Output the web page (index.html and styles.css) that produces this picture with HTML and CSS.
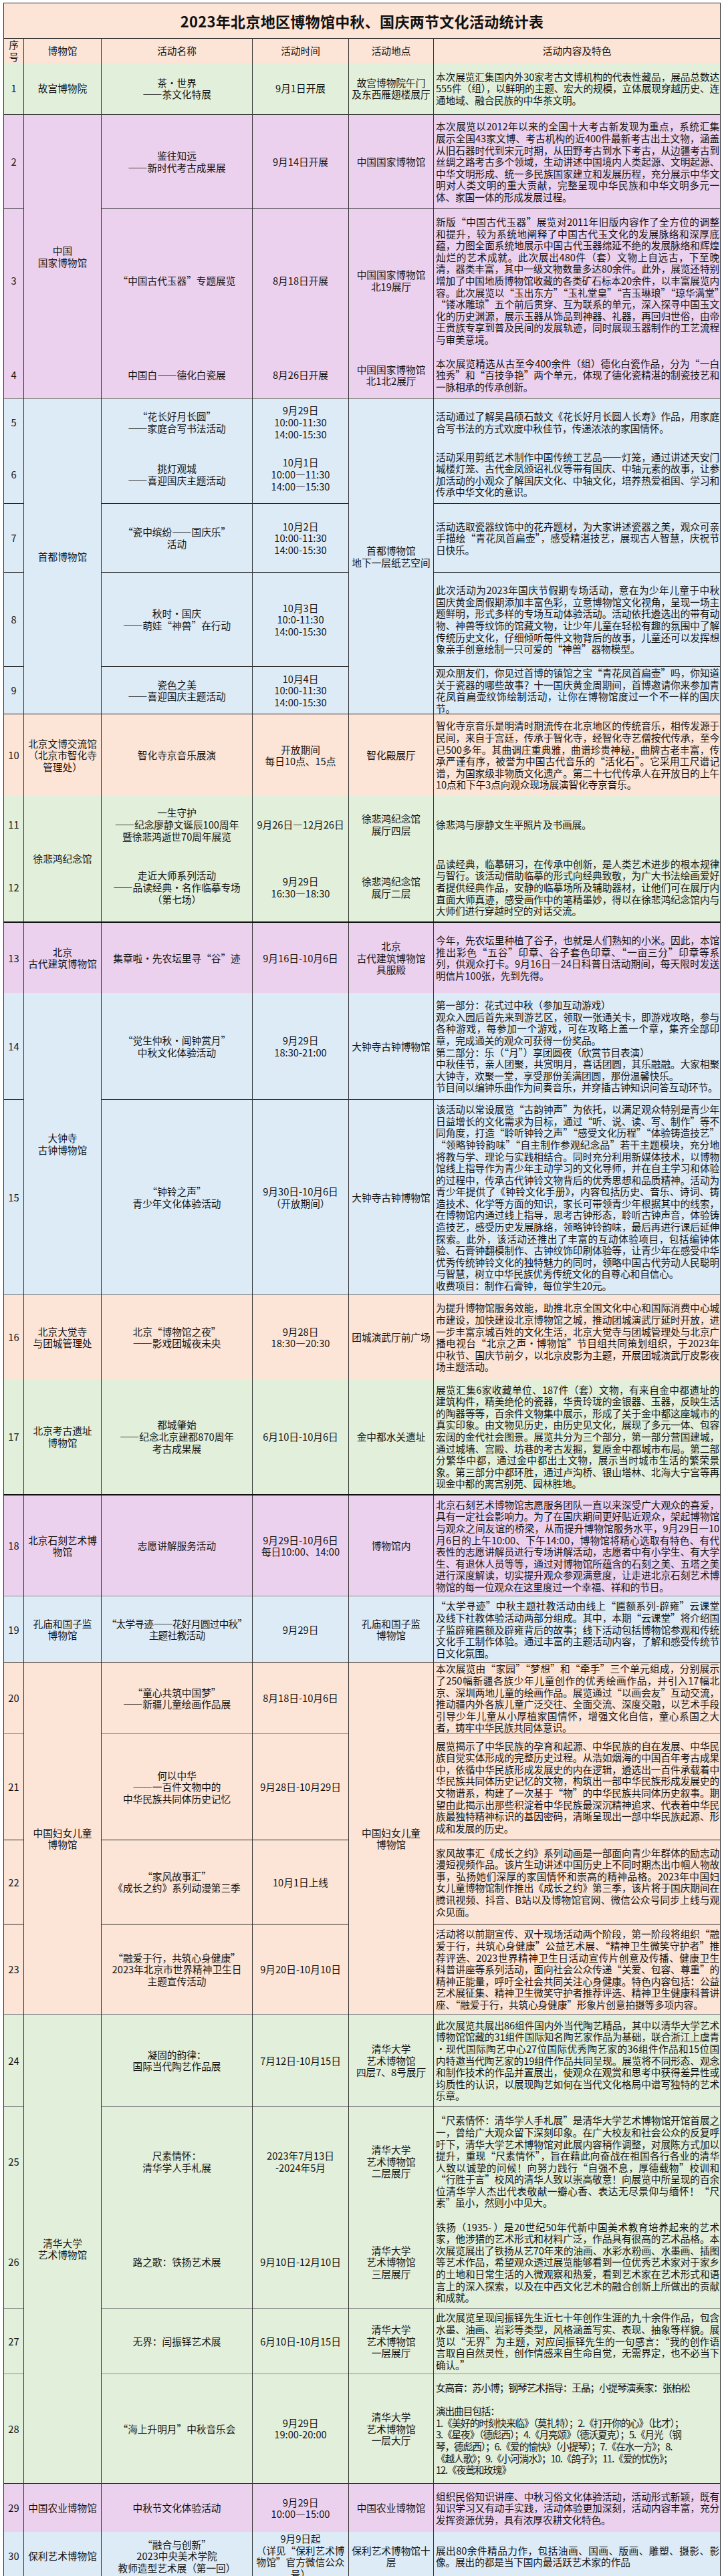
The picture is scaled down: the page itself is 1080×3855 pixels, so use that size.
FILE: index.html
```html
<!DOCTYPE html>
<html lang="zh-CN">
<head>
<meta charset="utf-8">
<title>2023年北京地区博物馆中秋、国庆两节文化活动统计表</title>
<link rel="stylesheet" href="styles.css">
</head>
<body>
<table class="stats">
  <colgroup>
    <col class="w-seq"><col class="w-mus"><col class="w-name"><col class="w-time"><col class="w-place"><col class="w-desc">
  </colgroup>
  <tbody>
    <tr class="c-peach h53 t-dark">
      <th class="title" colspan="6">2023年北京地区博物馆中秋、国庆两节文化活动统计表</th>
    </tr>
    <tr class="c-peach h36 t-dark head">
      <td>序<br>号</td><td>博物馆</td><td>活动名称</td><td>活动时间</td><td>活动地点</td><td>活动内容及特色</td>
    </tr>

    <tr class="c-green h78 t-none">
      <td>1</td><td>故宫博物院</td><td>茶·世界<br>——茶文化特展</td><td>9月1日开展</td><td>故宫博物院午门<br>及东西雁翅楼展厅</td>
      <td class="d">本次展览汇集国内外30家考古文博机构的代表性藏品，展品总数达555件（组），以鲜明的主题、宏大的规模，立体展现穿越历史、连通地域、融合民族的中华茶文明。</td>
    </tr>

    <tr class="c-purple h141 t-dark">
      <td>2</td><td rowspan="3">中国<br>国家博物馆</td><td>鉴往知远<br>——新时代考古成果展</td><td>9月14日开展</td><td>中国国家博物馆</td>
      <td class="d">本次展览以2012年以来的全国十大考古新发现为重点，系统汇集展示全国43家文博、考古机构的近400件最新考古出土文物，涵盖从旧石器时代到宋元时期，从田野考古到水下考古，从边疆考古到丝绸之路考古多个领域，生动讲述中国境内人类起源、文明起源、中华文明形成、统一多民族国家建立和发展历程，充分展示中华文明对人类文明的重大贡献，完整呈现中华民族和中华文明多元一体、家国一体的形成发展过程。</td>
    </tr>
    <tr class="c-purple h214 t-dark">
      <td>3</td><td>“中国古代玉器”专题展览</td><td>8月18日开展</td><td>中国国家博物馆<br>北19展厅</td>
      <td class="d">新版“中国古代玉器”展览对2011年旧版内容作了全方位的调整和提升，较为系统地阐释了中国古代玉文化的发展脉络和深厚底蕴，力图全面系统地展示中国古代玉器绵延不绝的发展脉络和辉煌灿烂的艺术成就。此次展出480件（套）文物上自远古，下至晚清，器类丰富，其中一级文物数量多达80余件。此外，展览还特别增加了中国地质博物馆收藏的各类矿石标本20余件，以丰富展览内容。此次展览以“玉出东方”“玉礼堂皇”“吉玉琳琅”“琼华满堂”“镂冰雕琼”五个前后贯穿、互为联系的单元，深入探寻中国玉文化的历史渊源，展示玉器从饰品到神器、礼器，再回归世俗，由帝王贵族专享到普及民间的发展轨迹，同时展现玉器制作的工艺流程与审美意境。</td>
    </tr>
    <tr class="c-purple h70 t-none">
      <td>4</td><td>中国白——德化白瓷展</td><td>8月26日开展</td><td>中国国家博物馆<br>北1北2展厅</td>
      <td class="d">本次展览精选从古至今400余件（组）德化白瓷作品，分为“一白独秀”和“百技争艳”两个单元，体现了德化瓷精湛的制瓷技艺和一脉相承的传承创新。</td>
    </tr>

    <tr class="c-blue h70 t-gray">
      <td>5</td><td rowspan="5">首都博物馆</td><td>“花长好月长圆”<br>——家庭合写书法活动</td><td>9月29日<br>10:00-11:30<br>14:00-15:30</td><td rowspan="5">首都博物馆<br>地下一层纸艺空间</td>
      <td class="d">活动通过了解吴昌硕石鼓文《花长好月长圆人长寿》作品，用家庭合写书法的方式欢度中秋佳节，传递浓浓的家国情怀。</td>
    </tr>
    <tr class="c-blue h87 t-none">
      <td>6</td><td>挑灯观城<br>——喜迎国庆主题活动</td><td>10月1日<br>10:00—11:30<br>14:00—15:30</td>
      <td class="d">活动采用剪纸艺术制作中国传统工艺品——灯笼，通过讲述天安门城楼灯笼、古代金凤颁诏礼仪等带有国庆、中轴元素的故事，让参加活动的小观众了解国庆文化、中轴文化，培养热爱祖国、学习和传承中华文化的意识。</td>
    </tr>
    <tr class="c-blue h103 t-dark">
      <td>7</td><td>“瓷中缤纷——国庆乐”<br>活动</td><td>10月2日<br>10:00-11:30<br>14:00-15:30</td>
      <td class="d">活动选取瓷器纹饰中的花卉题材，为大家讲述瓷器之美，观众可亲手描绘“青花凤首扁壶”，感受精湛技艺，展现古人智慧，庆祝节日快乐。</td>
    </tr>
    <tr class="c-blue h141 t-dark">
      <td>8</td><td>秋时·国庆<br>——萌娃“神兽”在行动</td><td>10月3日<br>10:0-11:30<br>14:00-15:30</td>
      <td class="d">此次活动为2023年国庆节假期专场活动，意在为少年儿童于中秋国庆黄金周假期添加丰富色彩，立意博物馆文化视角，呈现一场主题鲜明，形式多样的专场互动体验活动。活动依托遴选出的带有动物、神兽等纹饰的馆藏文物，让少年儿童在轻松有趣的氛围中了解传统历史文化，仔细倾听每件文物背后的故事，儿童还可以发挥想象亲手创意绘制一只可爱的“神兽”器物模型。</td>
    </tr>
    <tr class="c-blue h71 t-dark">
      <td>9</td><td>瓷色之美<br>——喜迎国庆主题活动</td><td>10月4日<br>10:00-11:30<br>14:00-15:30</td>
      <td class="d">观众朋友们，你见过首博的镇馆之宝“青花凤首扁壶”吗，你知道关于瓷器的哪些故事？十一国庆黄金周期间，首博邀请你来参加青花凤首扁壶纹饰绘制活动，让你在博物馆度过一个不一样的国庆节。</td>
    </tr>

    <tr class="c-peach h122 t-dark">
      <td>10</td><td>北京文博交流馆<br>（北京市智化寺<br>管理处）</td><td>智化寺京音乐展演</td><td>开放期间<br>每日10点、15点</td><td>智化殿展厅</td>
      <td class="d">智化寺京音乐是明清时期流传在北京地区的传统音乐，相传发源于民间，来自于宫廷，传承于智化寺，经智化寺艺僧按代传承，至今已500多年。其曲调庄重典雅，曲谱珍贵神秘，曲牌古老丰富，传承严谨有序，被誉为中国古代音乐的“活化石”。它采用工尺谱记谱，为国家级非物质文化遗产。第二十七代传承人在开放日的上午10点和下午3点向观众现场展演智化寺京音乐。</td>
    </tr>

    <tr class="c-green h86 t-none">
      <td>11</td><td rowspan="2">徐悲鸿纪念馆</td><td>一生守护<br>——纪念廖静文诞辰100周年<br>暨徐悲鸿逝世70周年展览</td><td>9月26日—12月26日</td><td>徐悲鸿纪念馆<br>展厅四层</td>
      <td class="d">徐悲鸿与廖静文生平照片及书画展。</td>
    </tr>
    <tr class="c-green h103 t-none">
      <td>12</td><td>走近大师系列活动<br>——品读经典·名作临摹专场<br>（第七场）</td><td>9月29日<br>16:30—18:30</td><td>徐悲鸿纪念馆<br>展厅二层</td>
      <td class="d">品读经典，临摹研习，在传承中创新，是人类艺术进步的根本规律与智行。该活动借助临摹的形式向经典致敬，为广大书法绘画爱好者提供经典作品，安静的临摹场所及辅助器材，让他们可在展厅内直面大师真迹，感受画作中的笔精墨妙，得以在徐悲鸿纪念馆内与大师们进行穿越时空的对话交流。</td>
    </tr>

    <tr class="c-purple h106 t-thick">
      <td>13</td><td>北京<br>古代建筑博物馆</td><td>集章啦·先农坛里寻“谷”迹</td><td>9月16日-10月6日</td><td>北京<br>古代建筑博物馆<br>具服殿</td>
      <td class="d">今年，先农坛里种植了谷子，也就是人们熟知的小米。因此，本馆推出彩色“五谷”印章、谷子套色印章、“一亩三分”印章等系列，供观众打卡。9月16日—24日科普日活动期间，每天限时发送明信片100张，先到先得。</td>
    </tr>

    <tr class="c-blue h160 t-none">
      <td>14</td><td rowspan="2">大钟寺<br>古钟博物馆</td><td>“觉生仲秋·闻钟赏月”<br>中秋文化体验活动</td><td>9月29日<br>18:30-21:00</td><td>大钟寺古钟博物馆</td>
      <td class="d">第一部分：花式过中秋（参加互动游戏）<br>观众入园后首先来到游艺区，领取一张通关卡，即游戏攻略，参与各种游戏，每参加一个游戏，可在攻略上盖一个章，集齐全部印章，完成通关的观众可获得一份奖品。<br>第二部分：乐（“月”）享团圆夜（欣赏节目表演）<br>中秋佳节，亲人团聚，共赏明月，喜话团圆，其乐融融。大家相聚大钟寺，欢聚一堂，享受那份美满团圆，那份温馨快乐。<br>节目间以编钟乐曲作为间奏音乐，并穿插古钟知识问答互动环节。</td>
    </tr>
    <tr class="c-blue h292 t-dark">
      <td>15</td><td>“钟铃之声”<br>青少年文化体验活动</td><td>9月30日-10月6日<br>（开放期间）</td><td>大钟寺古钟博物馆</td>
      <td class="d">该活动以常设展览“古韵钟声”为依托，以满足观众特别是青少年日益增长的文化需求为目标，通过“听、说、读、写、制作”等不同角度，打造“聆听钟铃之声”“感受文化历程”“体验铸造技艺”“领略钟铃韵味”“自主制作参观纪念品”若干主题模块，充分地将教与学、理论与实践相结合。同时充分利用新媒体技术，以博物馆线上指导作为青少年主动学习的文化导师，并在自主学习和体验的过程中，传承古代钟铃文物背后的优秀思想和品质精神。活动为青少年提供了《钟铃文化手册》，内容包括历史、音乐、诗词、铸造技术、化学等方面的知识，家长可带领青少年根据其中的线索，在博物馆内通过线上指导，思考古钟形态，聆听古钟声音，体验铸造技艺，感受历史发展脉络，领略钟铃韵味，最后再进行课后延伸探索。此外，该活动还推出了丰富的互动体验项目，包括编钟体验、石膏钟翻模制作、古钟纹饰印刷体验等，让青少年在感受中华优秀传统钟铃文化的独特魅力的同时，领略中国古代劳动人民聪明与智慧，树立中华民族优秀传统文化的自尊心和自信心。<br>收费项目：制作石膏钟，每位学生20元。</td>
    </tr>

    <tr class="c-peach h126 t-gray">
      <td>16</td><td>北京大觉寺<br>与团城管理处</td><td>北京“博物馆之夜”<br>——影戏团城夜未央</td><td>9月28日<br>18:30—20:30</td><td>团城演武厅前广场</td>
      <td class="d">为提升博物馆服务效能，助推北京全国文化中心和国际消费中心城市建设，加快建设北京博物馆之城，推动团城演武厅延时开放，进一步丰富京城百姓的文化生活，北京大觉寺与团城管理处与北京广播电视台“北京之声·博物馆”节目组共同策划组织，于2023年中秋节、国庆节前夕，以北京皮影为主题，开展团城演武厅皮影夜场主题活动。</td>
    </tr>

    <tr class="c-green h173 t-none">
      <td>17</td><td>北京考古遗址<br>博物馆</td><td>都城肇始<br>——纪念北京建都870周年<br>考古成果展</td><td>6月10日-10月6日</td><td>金中都水关遗址</td>
      <td class="d">展览汇集6家收藏单位、187件（套）文物，有来自金中都遗址的建筑构件，精美绝伦的瓷器，华贵玲珑的金银器、玉器，反映生活的陶器等等，百余件文物集中展示，形成了关于金中都这座城市的真实印象。由文物见历史，由历史见文化，展现了多元一体、包容宏阔的金代社会图景。展览共分为三个部分，第一部分营国建城，通过城墙、宫殿、坊巷的考古发掘，复原金中都城市布局。第二部分繁华中都，通过金中都出土文物，展示当时城市生活的繁荣景象。第三部分中都环胜，通过卢沟桥、银山塔林、北海大宁宫等再现金中都的离宫别苑、园林胜地。</td>
    </tr>

    <tr class="c-purple h152 t-thick">
      <td>18</td><td>北京石刻艺术博<br>物馆</td><td>志愿讲解服务活动</td><td>9月29日-10月6日<br>每日10:00、14:00</td><td>博物馆内</td>
      <td class="d">北京石刻艺术博物馆志愿服务团队一直以来深受广大观众的喜爱，具有一定社会影响力。为了在国庆期间更好贴近观众，架起博物馆与观众之间友谊的桥梁，从而提升博物馆服务水平，9月29日—10月6日的上午10:00、下午14:00，博物馆将精心选取有特色、有代表性的志愿讲解员进行专场讲解活动，志愿者中有小学生、有大学生、有退休人员等等，通过对博物馆所蕴含的石刻之美、五塔之美进行深度解读，切实提升观众参观满意度，让走进北京石刻艺术博物馆的每一位观众在这里度过一个幸福、祥和的节日。</td>
    </tr>

    <tr class="c-blue h99 t-gray">
      <td>19</td><td>孔庙和国子监<br>博物馆</td><td class="tight">“太学寻迹——花好月圆过中秋”<br>主题社教活动</td><td>9月29日</td><td>孔庙和国子监<br>博物馆</td>
      <td class="d">“太学寻迹”中秋主题社教活动由线上“匾额系列-辟雍”云课堂及线下社教体验活动两部分组成。其中，本期“云课堂”将介绍国子监辟雍匾额及辟雍背后的故事；线下活动包括博物馆参观和传统文化手工制作体验。通过丰富的主题活动内容，了解和感受传统节日文化氛围。</td>
    </tr>

    <tr class="c-peach h101 t-dark">
      <td>20</td><td rowspan="4">中国妇女儿童<br>博物馆</td><td>“童心共筑中国梦”<br>——新疆儿童绘画作品展</td><td>8月18日-10月6日</td><td rowspan="4">中国妇女儿童<br>博物馆</td>
      <td class="d">本次展览由“家园”“梦想”和“牵手”三个单元组成，分别展示了250幅新疆各族少年儿童创作的优秀绘画作品，并引入17幅北京、深圳两地儿童的绘画作品。展览通过“以画会友”互动交流，推动疆内外各族儿童广泛交往、全面交流、深度交融，以艺术手段引导少年儿童从小厚植家国情怀，增强文化自信，童心系国之大者，铸牢中华民族共同体意识。</td>
    </tr>
    <tr class="c-peach h159 t-gray">
      <td>21</td><td>何以中华<br>——一百件文物中的<br>中华民族共同体历史记忆</td><td>9月28日-10月29日</td>
      <td class="d">展览揭示了中华民族的孕育和起源、中华民族的自在发展、中华民族自觉实体形成的完整历史过程。从浩如烟海的中国百年考古成果中，依循中华民族形成发展史的内在逻辑，遴选出一百件承载着中华民族共同体历史记忆的文物，构筑出一部中华民族形成发展史的文物谱系，构建了一次基于“物”的中华民族共同体历史叙事。期望由此揭示出那些积淀着中华民族最深沉精神追求、代表着中华民族最独特精神标识的基因密码，清晰呈现出一部中华民族起源、形成和发展的历史。</td>
    </tr>
    <tr class="c-peach h126 t-dark">
      <td>22</td><td>“家风故事汇”<br>《成长之约》系列动漫第三季</td><td>10月1日上线</td>
      <td class="d">家风故事汇《成长之约》系列动画是一部面向青少年群体的励志动漫短视频作品。该片生动讲述中国历史上不同时期杰出巾帼人物故事，弘扬她们深厚的家国情怀和崇高的精神品格。2023年中国妇女儿童博物馆制作推出《成长之约》第三季，该片将于国庆期间在腾讯视频、抖音、B站以及博物馆官网、微信公众号同步上线与观众见面。</td>
    </tr>
    <tr class="c-peach h135 t-dark">
      <td>23</td><td>“融爱于行，共筑心身健康”<br>2023年北京市世界精神卫生日<br>主题宣传活动</td><td>9月20日-10月10日</td>
      <td class="d">活动将以前期宣传、双十现场活动两个阶段，第一阶段将组织“融爱于行，共筑心身健康”公益艺术展、“精神卫生微笑守护者”推荐评选、2023世界精神卫生日活动宣传片创意及传播、健康卫生科普讲座等系列活动，面向社会公众传递“关爱、包容、尊重”的精神正能量，呼吁全社会共同关注心身健康。特色内容包括：公益艺术展征集、精神卫生微笑守护者推荐评选、精神卫生健康科普讲座、“融爱于行，共筑心身健康”形象片创意拍摄等多项内容。</td>
    </tr>

    <tr class="c-green h138 t-gray">
      <td>24</td><td rowspan="5">清华大学<br>艺术博物馆</td><td>凝固的韵律：<br>国际当代陶艺作品展</td><td>7月12日-10月15日</td><td>清华大学<br>艺术博物馆<br>四层7、8号展厅</td>
      <td class="d">此次展览共展出86组件国内外当代陶艺精品，其中以清华大学艺术博物馆馆藏的31组件国际知名陶艺家作品为基础，联合浙江上虞青·现代国际陶艺中心27位国际优秀陶艺家的36组件作品和15位国内特邀当代陶艺家的19组件作品共同呈现。展览将不同形态、观念和制作技术的作品并置展出，使观众在观赏和思考中获得差异性或均质性的认识，以展现陶艺如何在当代文化格局中谱写独特的艺术乐章。</td>
    </tr>
    <tr class="c-green h164 t-gray">
      <td>25</td><td>尺素情怀：<br>清华学人手札展</td><td>2023年7月13日<br>-2024年5月</td><td>清华大学<br>艺术博物馆<br>二层展厅</td>
      <td class="d">“尺素情怀：清华学人手札展”是清华大学艺术博物馆开馆首展之一，曾给广大观众留下深刻印象。在广大校友和社会公众的反复呼吁下，清华大学艺术博物馆对此展内容稍作调整，对展陈方式加以提升，重现“尺素情怀”，旨在藉此向奋战在祖国各行各业的清华人致以诚挚的问候！向努力践行“自强不息，厚德载物”校训和“行胜于言”校风的清华人致以崇高敬意！向展览中所呈现的百余位清华学人杰出代表敬献一瓣心香、表达无尽景仰与缅怀！“尺素”虽小，然则小中见大。</td>
    </tr>
    <tr class="c-green h138 t-none">
      <td>26</td><td>路之歌：铁扬艺术展</td><td>9月10日-12月10日</td><td>清华大学<br>艺术博物馆<br>三层展厅</td>
      <td class="d">铁扬（1935- ）是20世纪50年代新中国美术教育培养起来的艺术家，他涉猎的艺术形式和材料广泛，作品具有很高的艺术品格。本次展览展出了铁扬从艺70年来的油画、水彩水粉画、水墨画、插图等艺术作品，希望观众透过展览能够看到一位优秀艺术家对于家乡的土地和日常生活的入微观察和热爱，看到艺术家在艺术形式和语言上的深入探索，以及在中西文化艺术的融合创新上所做出的贡献和成就。</td>
    </tr>
    <tr class="c-green h98 t-gray">
      <td>27</td><td>无界：闫振铎艺术展</td><td>6月10日-10月15日</td><td>清华大学<br>艺术博物馆<br>一层展厅</td>
      <td class="d">此次展览呈现闫振铎先生近七十年创作生涯的九十余件作品，包含水墨、油画、岩彩等类型，风格涵盖写实、表现、抽象等样貌。展览以“无界”为主题，对应闫振铎先生的一句感言：“我的创作语言取自自然灵性，创作情感来自生命自觉，无需界定，也不必当下确认。”</td>
    </tr>
    <tr class="c-green h164 t-gray">
      <td>28</td><td>“海上升明月”中秋音乐会</td><td>9月29日<br>19:00-20:00</td><td>清华大学<br>艺术博物馆<br>一层大厅</td>
      <td class="d list">女高音：苏小博；钢琴艺术指导：王晶；小提琴演奏家：张柏松<br><br>演出曲目包括：<br>1.《美好的时刻快来临》（莫扎特）；2.《打开你的心》（比才）；<br>3.《星夜》（德彪西）；4.《月亮颂》（德沃夏克）；5.《月光（钢<br>琴，德彪西）；6.《爱的愉快》（小提琴）；7.《在水一方》；8.<br>《越人歌》；9.《小河淌水》；10.《鸽子》；11.《爱的忧伤》；<br>12.《夜莺和玫瑰》</td>
    </tr>

    <tr class="c-purple h73 t-dark">
      <td>29</td><td>中国农业博物馆</td><td>中秋节文化体验活动</td><td>9月29日<br>10:00—15:00</td><td>中国农业博物馆</td>
      <td class="d">组织民俗知识讲座、中秋习俗文化体验活动，活动形式新颖，既有知识学习又有动手实践，活动体验更加深刻，活动内容丰富，充分发挥资源优势，具有浓厚农耕文化特色。</td>
    </tr>

    <tr class="c-blue h72 t-none last">
      <td>30</td><td>保利艺术博物馆</td><td>“融合与创新”<br>2023中央美术学院<br>教师造型艺术展（第一回）</td><td>9月9日起<br>（详见“保利艺术博物馆”官方微信公众号）</td><td>保利艺术博物馆十层</td>
      <td class="d">展出80余件精品力作，包括油画、国画、版画、雕塑、摄影、影像。展出的都是当下国内最活跃艺术家的作品</td>
    </tr>
  </tbody>
</table>
</body>
</html>
```

FILE: styles.css
```css
html, body {
  background: #ffffff;
}

body {
  margin: 4px 0 0 5px;
  font-family: "Noto Sans CJK SC", "Liberation Serif", serif;
  font-size: 14.67px;
  color: #141414;
}

.stats {
  border-collapse: collapse;
  table-layout: fixed;
  width: 1072px;
}

.w-seq { width: 30px; }
.w-mus { width: 116px; }
.w-name { width: 226px; }
.w-time { width: 144px; }
.w-place { width: 127px; }
.w-desc { width: 429px; }

.stats td,
.stats th {
  border-left: 1px solid #333333;
  border-right: 1px solid #333333;
  border-top: 1px solid #333333;
  border-bottom: none;
  padding: 0 3px;
  text-align: center;
  vertical-align: middle;
  line-height: 17.6px;
  font-weight: normal;
}

.stats td.d {
  text-align: justify;
  padding: 0 1px 0 3px;
  letter-spacing: -0.12px;
}

.stats td.list {
  white-space: nowrap;
  letter-spacing: -1.1px;
}

.stats td.tight {
  padding: 0;
  letter-spacing: -0.7px;
  white-space: nowrap;
}

.stats .title {
  font-size: 22px;
  font-weight: bold;
  line-height: 26px;
  letter-spacing: 0.3px;
  color: #111111;
}

.head td {
  font-size: 14.67px;
}

/* row backgrounds */
.c-peach > td, .c-peach > th { background: #fce4d6; }
.c-green > td { background: #e2efda; }
.c-purple > td { background: #ecd1ee; }
.c-blue > td { background: #ddebf7; }

/* horizontal separators */
.t-dark > td, .t-dark > th { border-top: 1px solid #262626; }
.t-thick > td { border-top: 2px solid #111111; }
.t-gray > td { border-top: 1px solid #8c8c8c; }
.t-none > td { border-top: none; }
.last > td { border-bottom: 1px solid #333333; }

/* row heights */
.h36 { height: 36px; }
.h53 { height: 53px; }
.h70 { height: 70px; }
.h71 { height: 71px; }
.h72 { height: 72px; }
.h73 { height: 73px; }
.h78 { height: 78px; }
.h86 { height: 86px; }
.h87 { height: 87px; }
.h98 { height: 98px; }
.h99 { height: 99px; }
.h101 { height: 101px; }
.h103 { height: 103px; }
.h106 { height: 106px; }
.h122 { height: 122px; }
.h126 { height: 126px; }
.h135 { height: 135px; }
.h138 { height: 138px; }
.h141 { height: 141px; }
.h152 { height: 152px; }
.h159 { height: 159px; }
.h160 { height: 160px; }
.h164 { height: 164px; }
.h173 { height: 173px; }
.h214 { height: 214px; }
.h292 { height: 292px; }
```
